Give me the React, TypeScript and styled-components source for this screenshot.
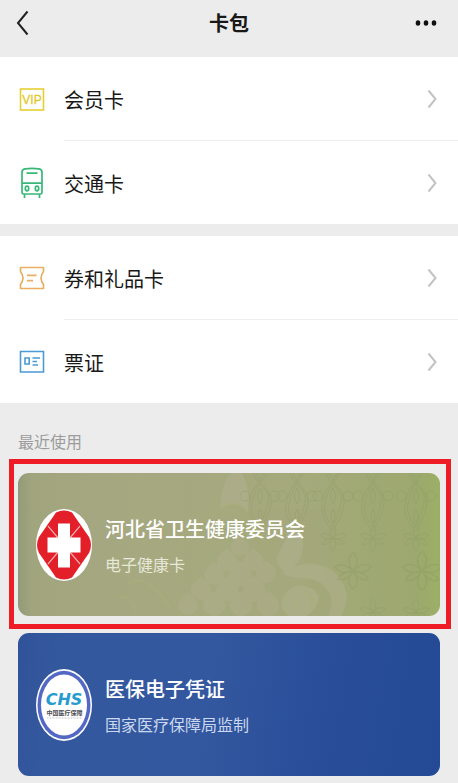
import React from "react";
import styled, { createGlobalStyle } from "styled-components";

const GlobalStyle = createGlobalStyle`
  * { box-sizing: border-box; }
  body {
    margin: 0;
    background: #ececec;
    color: #181818;
    font-family: "Liberation Sans", "Noto Sans CJK SC", sans-serif;
  }
  button { font: inherit; color: inherit; background: none; border: 0; padding: 0; cursor: pointer; }
  svg { display: block; }
`;

const Header = styled.header`
  display: grid;
  grid-template-columns: 64px 1fr 64px;
  align-items: center;
  height: 57px;
  padding-bottom: 12px;
`;

const Title = styled.h1`
  margin: 0;
  padding-top: 2px;
  text-align: center;
  font-size: 20px;
  line-height: 28px;
  font-weight: 700;
`;

const HeaderButton = styled.button<{ $end?: boolean }>`
  display: flex;
  align-items: center;
  justify-content: ${(p) => (p.$end ? "flex-end" : "flex-start")};
  height: 44px;
  padding: ${(p) => (p.$end ? "0 20px 0 0" : "0 0 0 16px")};
`;

const Group = styled.ul`
  list-style: none;
  margin: 0 0 12px;
  padding: 0;
  background: #fff;
  &:last-of-type { margin-bottom: 0; }
`;

const Row = styled.button`
  display: flex;
  align-items: stretch;
  width: 100%;
  padding-left: 18px;
  text-align: left;
`;

const RowIcon = styled.span`
  display: flex;
  align-items: center;
  width: 46px;
`;

const RowBody = styled.span<{ $divided: boolean }>`
  box-sizing: content-box;
  flex: 1;
  display: flex;
  align-items: center;
  justify-content: space-between;
  height: 83px;
  padding-right: 21px;
  border-bottom: ${(p) => (p.$divided ? "1px solid #efefef" : "0")};
`;

const RowLabel = styled.span`
  padding-top: 4px;
  font-size: 20px;
  line-height: 28px;
`;

const SectionLabel = styled.h2`
  margin: 0;
  padding: 28px 18px 4px;
  font-size: 16px;
  line-height: 24px;
  font-weight: 400;
  color: #9c9c9c;
`;

const Highlight = styled.div`
  margin: 0 7px 0 9px;
  padding: 9px 6px 8px 4px;
  border: 5px solid #ee1c25;
`;

const CardSlot = styled.div`
  padding: 4px 18px 8px;
`;

const Card = styled.button<{ $tone: "olive" | "blue" }>`
  position: relative;
  display: flex;
  align-items: center;
  gap: 13px;
  width: 100%;
  height: 143px;
  padding: 0 18px;
  border-radius: 11px;
  overflow: hidden;
  text-align: left;
  color: #fff;
  background: ${(p) =>
    p.$tone === "olive"
      ? "linear-gradient(90deg, #929a77 0, #a1a57e 14px, #a6a880 28%, #a5aa7d 65%, #9da96f 94%, #9caf66 100%)"
      : "linear-gradient(100deg, #30529a 0, #34589e 10%, #33589f 45%, #294d99 72%, #244995 100%)"};
`;

const Artwork = styled.svg`
  position: absolute;
  inset: 0;
  width: 100%;
  height: 100%;
`;

const Logo = styled.svg`
  position: relative;
  flex: none;
  width: 56px;
  height: 72px;
`;

const CardText = styled.span`
  position: relative;
  display: flex;
  flex-direction: column;
  gap: 10px;
  padding-top: 4px;
`;

const CardName = styled.span`
  font-size: 20px;
  line-height: 28px;
  font-weight: 500;
`;

const CardIssuer = styled.span<{ $tone: "olive" | "blue" }>`
  font-size: 16px;
  line-height: 24px;
  color: ${(p) => (p.$tone === "olive" ? "#e6e8d8" : "#ccd8ef")};
`;

const VipIcon = () => (
  <svg width="28" height="32" viewBox="0 0 28 32" fill="none" aria-hidden="true">
    <rect x="2.5" y="6" width="23" height="21" stroke="#e6cf35" strokeWidth="1.6" />
    <text x="14" y="21" textAnchor="middle" fontSize="12" fill="#e2c92b" stroke="#e2c92b" strokeWidth="0.3" fontFamily="Liberation Sans, sans-serif">VIP</text>
  </svg>
);

const BusIcon = () => (
  <svg width="28" height="32" viewBox="0 0 28 32" fill="none" stroke="#37b878" strokeWidth="1.7" aria-hidden="true">
    <path d="M4 25.5V5q0-2.6 3-3.2 7-1 14 0 3 .6 3 3.2v20.500q0 1.500-1.500 1.500h-17Q4 27 4 25.500zM4 16.200h20M8.500 6.200h11M6.500 27v4M21.500 27v4" />
    <ellipse cx="9" cy="21.500" rx="1.700" ry="2.300" />
    <ellipse cx="19" cy="21.500" rx="1.700" ry="2.300" />
  </svg>
);

const CouponIcon = () => (
  <svg width="28" height="32" viewBox="0 0 28 32" fill="none" stroke="#e8ae62" strokeWidth="1.7" strokeLinejoin="round" aria-hidden="true">
    <path d="M2.500 5.500h23v4q-2.500 3.200-2.500 6.500t2.500 6.500v4h-23v-4q2.500-3.200 2.500-6.500t-2.500-6.500zM9 13.300h9.500M9 18.700h6" />
  </svg>
);

const TicketIcon = () => (
  <svg width="28" height="32" viewBox="0 0 28 32" fill="none" stroke="#4a9ad4" strokeWidth="1.600" aria-hidden="true">
    <path d="M2.500 5.500h23v20.500h-23zM7 12h4.200v6H7zM14.500 12H22M14.500 15.500h4.500M14.500 19H20" />
  </svg>
);

const Chevron = () => (
  <svg width="10" height="20" viewBox="0 0 10 20" fill="none" stroke="#c3c3c3" strokeWidth="2" aria-hidden="true">
    <path d="M1.500 1.500 8.500 10l-7 8.500" />
  </svg>
);

const chainColumns = [242, 279, 315, 355, 398];
const blossoms = [
  [335, 98, 1.4],
  [404, 98, 1.5],
  [315, 65, 1],
  [355, 65, 1],
  [398, 65, 1],
  [355, 139, 1],
  [398, 139, 1],
];

const petals = [
  [222, 74, 8],
  [209, 88, 9],
  [235, 88, 9],
  [196, 102, 9],
  [222, 102, 10],
  [248, 100, 9],
  [183, 117, 9],
  [209, 117, 10],
  [236, 117, 10],
  [170, 132, 9],
  [196, 132, 10],
  [223, 132, 10],
  [250, 132, 10],
];

const OliveArt = () => (
  <Artwork viewBox="0 0 422 143" preserveAspectRatio="xMaxYMid slice" aria-hidden="true">
    <g fill="#b6b395" opacity="0.42">
      <path d="M202 36Q203 12 212 0h12q8 16 7 40-7-9-14-9t-15 5z" />
      <path d="M272 50q14 10 13 24-2 17-17 26-11-7-9-17 9-14 13-33z" />
      <path d="M264 100q14-10 33-9 28 4 32 34-2 11-6 18h-13q7-14 1-24-8-13-24-14-14 1-23-5z" />
      <path d="M278 113q17-2 23 11-2 13-13 19h-17q-11-7-6-18 4-9 13-12z" />
    </g>
    <g fill="#b6b395" opacity="0.3">
      {petals.map(([x, y, r]) => (
        <path
          key={`${x}-${y}`}
          d={`M${x} ${y - r * 1.4}Q${x + r * 1.5} ${y - r * 0.4} ${x + r} ${y + r * 0.5} ${x} ${y + r * 1.7} ${x - r} ${y + r * 0.5} ${x - r * 1.5} ${y - r * 0.4} ${x} ${y - r * 1.4}z`}
        />
      ))}
    </g>
    <g fill="none" stroke="#a9b077" strokeWidth="2" opacity="0.5">
      <path d="M278 134q-3-13 6-15 13 1 9 17M270 143q-5-14 0-24M110 112q10-9 22 0t20 24M100 124q14-3 17 13" />
      <path d="M202 35q14-9 28 3" />
    </g>
    <g fill="none" stroke="#87975f" strokeWidth="1" opacity="0.32">
      {chainColumns.map((x) => (
        <g key={x} transform={`translate(${x} 0)`}>
          <path d="M-7 0Q-4 9 3 15T8 30 0 54Q-11 42-8 30T-3 15 7 0M-4 0Q0 10 6 16t5 15T0 58Q-14 44-11 31T-6 16 4 0" />
          <path d="M0 15q5 8 0 16-5-8 0-16zM0 36q4 7 0 14-4-7 0-14z" />
          <circle cx="-15" cy="23" r="5" />
          <circle cx="15" cy="23" r="5" />
        </g>
      ))}
      {blossoms.map(([x, y, s]) => (
        <g key={`${x}-${y}`} transform={`translate(${x} ${y}) scale(${s})`}>
          <path d="M0 0Q-6-8 0-13 6-8 0 0zM0 0Q-6 8 0 13 6 8 0 0zM0 0Q-7-7-13-3-9 3 0 0zM0 0Q7-7 13-3 9 3 0 0zM0 0Q-9 1-11 6-5 8 0 0zM0 0Q9 1 11 6 5 8 0 0z" />
        </g>
      ))}
    </g>
  </Artwork>
);

const HealthLogo = () => (
  <Logo viewBox="0 0 56 72" aria-hidden="true">
    <ellipse cx="28" cy="36" rx="28" ry="36" fill="#fff" />
    <path d="M20 3.500q8-4 16 0L53 28q4 8 0 16L36 68.500q-8 4-16 0L3 44q-4-8 0-16z" fill="#e3202a" />
    <path d="m12 17 32 38M44 17 12 55" stroke="#f3a9a4" strokeWidth="1.200" />
    <path d="M22 14.500h12v14h10.500v15H34v15H22v-15H11.500v-15H22z" fill="#fff" />
  </Logo>
);

const InsuranceLogo = () => (
  <Logo viewBox="0 0 56 72" aria-hidden="true">
    <ellipse cx="28" cy="36" rx="28" ry="36" fill="#fff" />
    <ellipse cx="28" cy="36" rx="26.500" ry="34.200" fill="#5368c4" />
    <ellipse cx="28" cy="36" rx="23" ry="30.500" fill="#fff" />
    <text x="28" y="36" textAnchor="middle" fontFamily="DejaVu Sans, sans-serif" fontSize="16" fontWeight="700" fontStyle="italic" fill="#279bce">CHS</text>
    <text x="28.500" y="46" textAnchor="middle" fontFamily="Noto Sans CJK SC, sans-serif" fontSize="6" fontWeight="700" fill="#4d4d55">中国医疗保障</text>
    <path d="M11 49h35" stroke="#c5c8ce" strokeWidth="1" strokeDasharray="1 0.500" />
  </Logo>
);

const groups = [
  [
    { label: "会员卡", Icon: VipIcon },
    { label: "交通卡", Icon: BusIcon },
  ],
  [
    { label: "券和礼品卡", Icon: CouponIcon },
    { label: "票证", Icon: TicketIcon },
  ],
];

export default function App() {
  return (
    <>
      <GlobalStyle />
      <Header>
        <HeaderButton aria-label="返回">
          <svg width="13" height="26" viewBox="0 0 13 26" fill="none" stroke="#222" strokeWidth="2" aria-hidden="true">
            <path d="M11.500 1.500 2 13l9.500 11.500" />
          </svg>
        </HeaderButton>
        <Title>卡包</Title>
        <HeaderButton $end aria-label="更多">
          <svg width="24" height="8" viewBox="0 0 24 8" fill="#111" aria-hidden="true">
            <ellipse cx="4" cy="4" rx="2.300" ry="2.800" />
            <ellipse cx="12" cy="4" rx="2.300" ry="2.800" />
            <ellipse cx="20" cy="4" rx="2.300" ry="2.800" />
          </svg>
        </HeaderButton>
      </Header>
      <main>
        {groups.map((items, g) => (
          <Group key={g}>
            {items.map(({ label, Icon }, i) => (
              <li key={label}>
                <Row>
                  <RowIcon>
                    <Icon />
                  </RowIcon>
                  <RowBody $divided={i < items.length - 1}>
                    <RowLabel>{label}</RowLabel>
                    <Chevron />
                  </RowBody>
                </Row>
              </li>
            ))}
          </Group>
        ))}
        <SectionLabel>最近使用</SectionLabel>
        <Highlight>
          <Card $tone="olive">
            <OliveArt />
            <HealthLogo />
            <CardText>
              <CardName>河北省卫生健康委员会</CardName>
              <CardIssuer $tone="olive">电子健康卡</CardIssuer>
            </CardText>
          </Card>
        </Highlight>
        <CardSlot>
          <Card $tone="blue">
            <InsuranceLogo />
            <CardText>
              <CardName>医保电子凭证</CardName>
              <CardIssuer $tone="blue">国家医疗保障局监制</CardIssuer>
            </CardText>
          </Card>
        </CardSlot>
      </main>
    </>
  );
}
